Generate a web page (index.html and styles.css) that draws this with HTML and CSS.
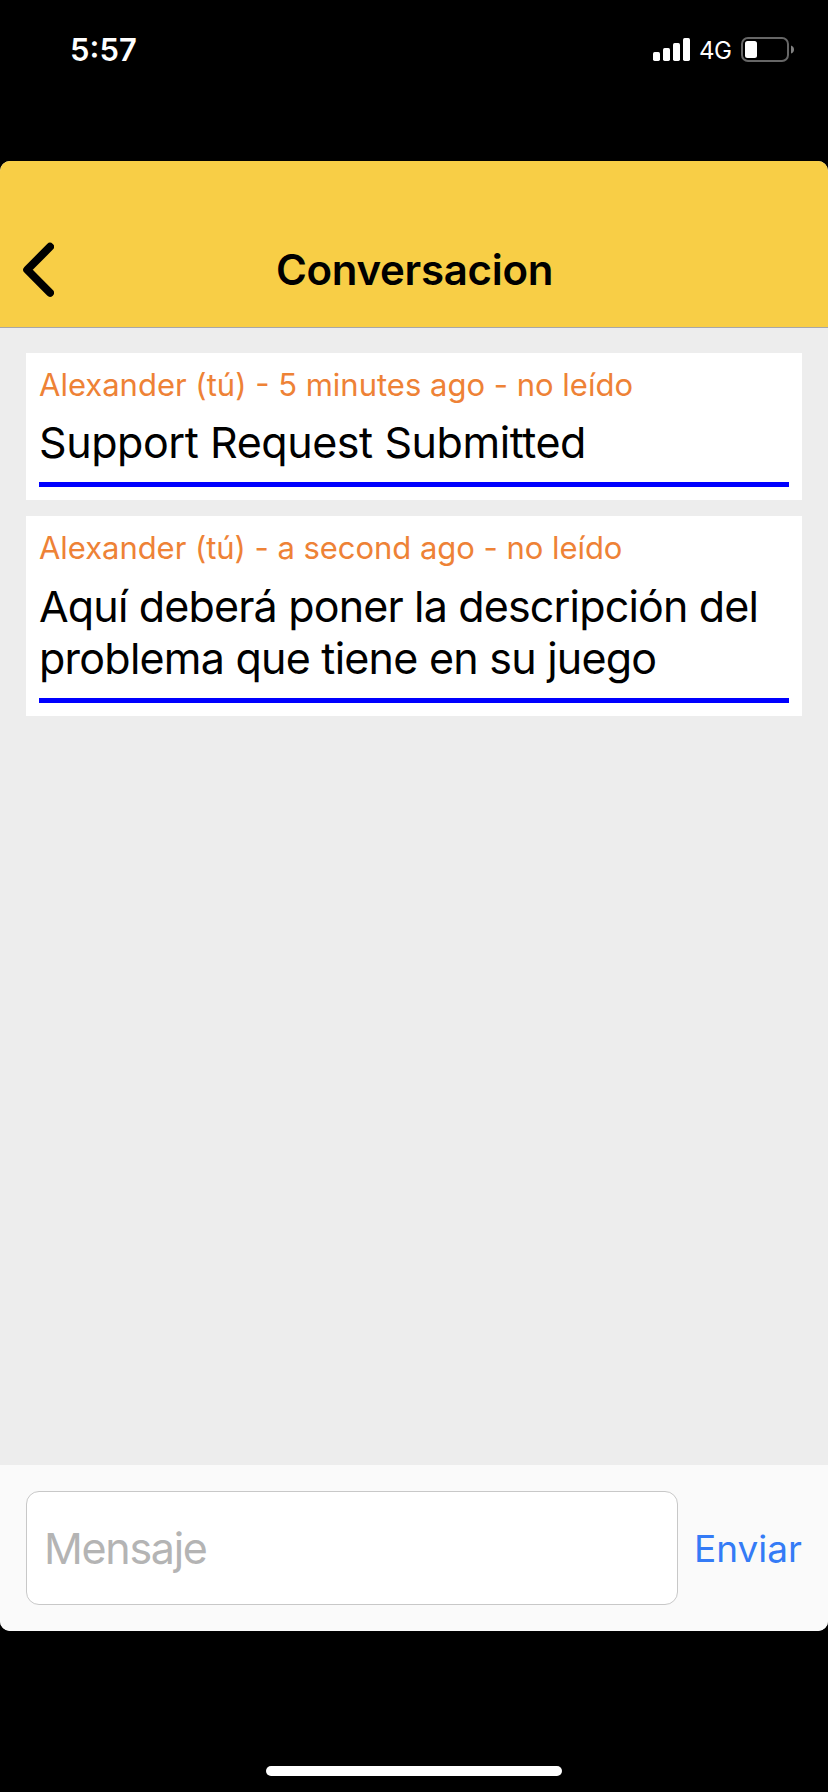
FILE: index.html
```html
<!DOCTYPE html>
<html lang="es">
<head>
<meta charset="utf-8">
<title>Conversacion</title>
<link rel="stylesheet" href="styles.css">
</head>
<body>
<div class="phone">
  <div class="status">
    <span class="time">5:57</span>
    <div class="indicators">
      <svg class="signal" width="37" height="24" viewBox="0 0 37 24" fill="#fff">
        <rect x="0" y="14" width="7" height="9" rx="1.7"/>
        <rect x="10" y="10" width="7" height="13" rx="1.7"/>
        <rect x="20" y="5" width="7" height="18" rx="1.7"/>
        <rect x="30" y="0" width="7" height="23" rx="1.7"/>
      </svg>
      <span class="network">4G</span>
      <svg class="battery" width="54" height="26" viewBox="0 0 54 26">
        <rect x="1" y="1" width="46" height="23" rx="6" fill="none" stroke="#666" stroke-width="2"/>
        <rect x="4" y="4" width="12" height="17" rx="2.5" fill="#fff"/>
        <path d="M50 8.5Q53 9.5 53 12.5T50 16.5Z" fill="#808080"/>
      </svg>
    </div>
  </div>
  <main class="app">
    <header class="header">
      <svg class="back" width="32" height="56" viewBox="0 0 32 56">
        <path d="M28 4.8L5.2 27.8L28 50.8" fill="none" stroke="#000" stroke-width="8" stroke-linecap="round" stroke-linejoin="round"/>
      </svg>
      <h1 class="title">Conversacion</h1>
    </header>
    <section class="messages">
      <article class="card">
        <p class="meta meta-first">Alexander (tú) - 5 minutes ago - no leído</p>
        <p class="text text-first">Support Request Submitted</p>
        <div class="rule"></div>
      </article>
      <article class="card">
        <p class="meta meta-second">Alexander (tú) - a second ago - no leído</p>
        <p class="text text-second"><span class="line line-a">Aquí deberá poner la descripción del</span> <span class="line line-b">problema que tiene en su juego</span></p>
        <div class="rule"></div>
      </article>
    </section>
    <footer class="composer">
      <div class="field"><span class="placeholder">Mensaje</span></div>
      <span class="send">Enviar</span>
    </footer>
  </main>
  <div class="home"></div>
</div>
</body>
</html>
```
FILE: styles.css
```css
* { box-sizing: border-box; }
body { margin: 0; background: #000; font-family: Inter, "Liberation Sans", sans-serif; }
h1, p { margin: 0; }
.phone { width: 828px; height: 1792px; display: flex; flex-direction: column; overflow: hidden; }
.status { height: 161px; flex: none; display: flex; justify-content: space-between; align-items: flex-start; padding: 30px 33px 0 70px; color: #fff; }
.time { font-size: 31px; line-height: 40px; font-weight: 600; }
.indicators { display: flex; padding-top: 7px; }
.signal { margin-top: 1px; }
.network { width: 32px; margin: 0 10px 0 9px; font-size: 24px; line-height: 27px; letter-spacing: -0.5px; white-space: nowrap; }
.app { height: 1470px; flex: none; display: flex; flex-direction: column; border-radius: 10px; overflow: hidden; background: #ededed; }
.header { height: 167px; flex: none; display: grid; grid-template-columns: 60px 1fr 60px; padding: 81px 21px 0 22px; background: #f8ce46; border-bottom: 1px solid #a7a7aa; }
.title { text-align: center; font-size: 42px; line-height: 56px; font-weight: 600; letter-spacing: -0.3px; white-space: nowrap; }
.messages { flex: 1; display: flex; flex-direction: column; gap: 16px; padding: 25px 26px; }
.card { background: #fff; padding: 13px; }
.meta { color: #ee8236; font-size: 31px; line-height: 37px; margin-bottom: -1px; white-space: nowrap; }
.meta-second { letter-spacing: -0.04px; }
.text { color: #000; font-size: 43px; line-height: 52px; margin: 14px 0; white-space: nowrap; letter-spacing: -0.43px; }
.text-second { margin-top: 15px; }
.line { display: block; }
.line-a { letter-spacing: -0.83px; }
.line-b { letter-spacing: -0.76px; }
.rule { height: 5px; background: #00f; }
.composer { height: 166px; flex: none; display: flex; gap: 16px; padding: 26px 0 26px 26px; background: #fafafa; }
.field { flex: none; width: 652px; height: 114px; display: flex; align-items: center; padding-left: 17px; background: #fff; border: 1px solid #c8c8c8; border-radius: 13px; }
.placeholder { color: #b4b4b4; font-size: 43px; line-height: 52px; letter-spacing: -1.3px; }
.send { color: #347bf6; font-size: 37px; line-height: 115px; }
.home { width: 296px; height: 10px; margin: 135px auto 0; border-radius: 5px; background: #fff; }
```
